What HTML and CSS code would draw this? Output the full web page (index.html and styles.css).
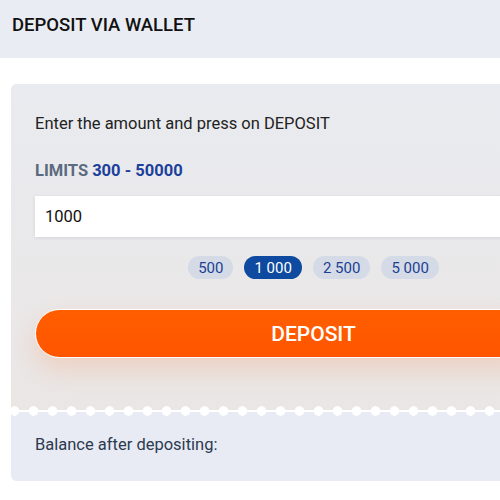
FILE: index.html
```html
<!DOCTYPE html>
<html lang="en">
<head>
	<meta charset="UTF-8">
	<title>Deposit via wallet</title>
	<link rel="stylesheet" href="styles.css">
</head>
<body>
	<div class="page">
		<div class="header">DEPOSIT VIA WALLET</div>

		<div class="card">
			<div class="card-top">
				<p class="hint">Enter the amount and press on DEPOSIT</p>
				<p class="limits">LIMITS <span>300 - 50000</span></p>
				<input type="text" class="amount" value="1000">
				<div class="chips">
					<button type="button" class="chip">500</button>
					<button type="button" class="chip active">1 000</button>
					<button type="button" class="chip">2 500</button>
					<button type="button" class="chip">5 000</button>
				</div>
				<button type="button" class="deposit">DEPOSIT</button>
			</div>
			<div class="sep"></div>
			<div class="card-bottom">
				<p class="balance">Balance after depositing:</p>
			</div>
		</div>
	</div>
</body>
</html>
```

FILE: styles.css
```css
* {
	margin: 0;
	padding: 0;
	box-sizing: border-box;
}

body {
	font-family: Roboto, "Liberation Sans", sans-serif;
	background: #fff;
	overflow: hidden;
}

.page {
	width: 640px;
}

.header {
	height: 58px;
	background: #e9ecf3;
	padding: 14px 12px 0;
	font-size: 18.5px;
	font-weight: 500;
	color: #111;
	line-height: 22px;
}

.card {
	margin: 26px 0 0 11px;
	width: 604px;
	border-radius: 6px;
	background: #e8ebf2;
	overflow: hidden;
}

.card-top {
	padding: 30px 23px 53px 24px;
	background: linear-gradient(#e9ebf0, #eae6e4);
}

.hint {
	font-size: 16.5px;
	color: #222;
	line-height: 20px;
}

.limits {
	margin-top: 27px;
	font-size: 16.5px;
	font-weight: 700;
	color: #5b6a80;
	line-height: 20px;
}

.limits span {
	color: #1b3f9b;
}

.amount {
	display: block;
	margin-top: 15px;
	width: 100%;
	height: 41px;
	border: none;
	outline: none;
	background: #fff;
	padding: 0 10px;
	font-family: inherit;
	font-size: 16.5px;
	color: #111;
	box-shadow: 0 1px 3px rgba(150, 160, 180, .25);
}

.chips {
	display: flex;
	justify-content: center;
	gap: 11px;
	margin-top: 19px;
}

.chip {
	height: 23px;
	padding: 0 10px;
	border: none;
	border-radius: 12px;
	background: #d4dbe6;
	color: #1c3f94;
	font-family: inherit;
	font-size: 15px;
}

.chip.active {
	background: #0d4aa0;
	color: #fff;
}

.deposit {
	display: block;
	width: 100%;
	height: 49px;
	margin-top: 30px;
	border: 1px solid #fff;
	border-radius: 25px;
	background: linear-gradient(#ff5e00, #ff5500);
	color: #fff;
	font-family: inherit;
	font-size: 21px;
	font-weight: 500;
	box-shadow: 0 12px 24px rgba(255, 110, 40, .18);
}

.sep {
	height: 10px;
	margin-top: -5px;
	background:
		radial-gradient(circle, #fff 4.5px, transparent 5px) 13px 0 / 19px 10px repeat-x,
		linear-gradient(transparent 4px, #fff 4px, #fff 6px, transparent 6px);
	position: relative;
	margin-bottom: -5px;
}

.card-bottom {
	padding: 24px 24px 26px;
	background: #e8ebf3;
}

.balance {
	font-size: 16.5px;
	color: #2c3a50;
	line-height: 20px;
}
```
